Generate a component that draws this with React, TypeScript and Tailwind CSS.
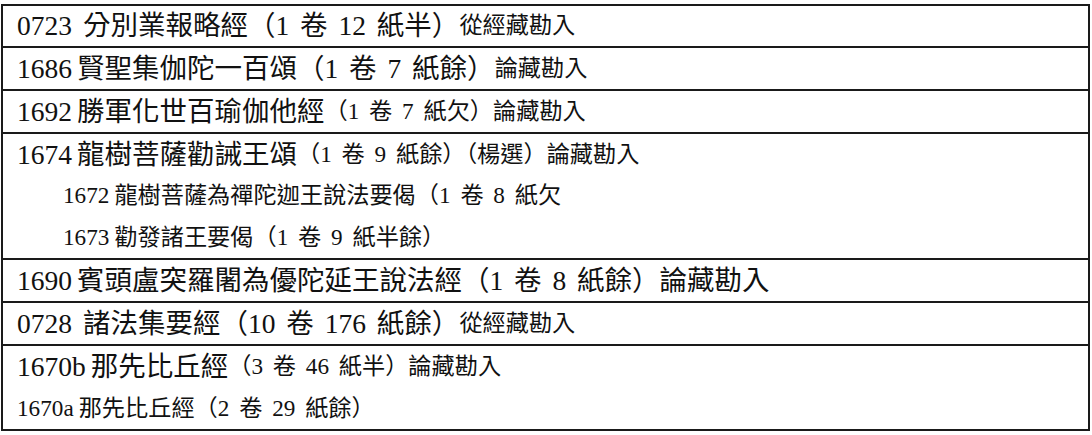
type Size = "big" | "small";

interface Part {
  text: string;
  size: Size;
}

interface Line {
  num: string;
  numSize: Size;
  wideGap?: boolean;
  parts: Part[];
  indent?: boolean;
}

interface Entry {
  id: string;
  heightClass: string;
  lines: Line[];
}

const big = (text: string): Part => ({ text, size: "big" });
const small = (text: string): Part => ({ text, size: "small" });

const SIZE_CLASS: Record<Size, string> = {
  big: "text-[27.5px] leading-none",
  small: "text-[23.2px] leading-none",
};

const ENTRIES: Entry[] = [
  {
    id: "0723",
    heightClass: "h-[42px]",
    lines: [
      {
        num: "0723",
        numSize: "big",
        wideGap: true,
        parts: [big("分別業報略經（1 卷 12 紙半）"), small("從經藏勘入")],
      },
    ],
  },
  {
    id: "1686",
    heightClass: "h-[43px]",
    lines: [
      { num: "1686", numSize: "big", parts: [big("賢聖集伽陀一百頌（1 卷 7 紙餘）"), small("論藏勘入")] },
    ],
  },
  {
    id: "1692",
    heightClass: "h-[43px]",
    lines: [
      { num: "1692", numSize: "big", parts: [big("勝軍化世百瑜伽他經"), small("（1 卷 7 紙欠）論藏勘入")] },
    ],
  },
  {
    id: "1674",
    heightClass: "h-[126px]",
    lines: [
      {
        num: "1674",
        numSize: "big",
        parts: [big("龍樹菩薩勸誡王頌"), small("（1 卷 9 紙餘）（楊選）論藏勘入")],
      },
      { num: "1672", numSize: "small", indent: true, parts: [small("龍樹菩薩為禪陀迦王說法要偈（1 卷 8 紙欠")] },
      { num: "1673", numSize: "small", indent: true, parts: [small("勸發諸王要偈（1 卷 9 紙半餘）")] },
    ],
  },
  {
    id: "1690",
    heightClass: "h-[43px]",
    lines: [
      { num: "1690", numSize: "big", parts: [big("賓頭盧突羅闍為優陀延王說法經（1 卷 8 紙餘）論藏勘入")] },
    ],
  },
  {
    id: "0728",
    heightClass: "h-[43px]",
    lines: [
      {
        num: "0728",
        numSize: "big",
        wideGap: true,
        parts: [big("諸法集要經（10 卷 176 紙餘）"), small("從經藏勘入")],
      },
    ],
  },
  {
    id: "1670",
    heightClass: "h-[83px]",
    lines: [
      { num: "1670b", numSize: "big", parts: [big("那先比丘經"), small("（3 卷 46 紙半）論藏勘入")] },
      { num: "1670a", numSize: "small", parts: [small("那先比丘經（2 卷 29 紙餘）")] },
    ],
  },
];

function TextLine({ line }: { line: Line }) {
  return (
    <div
      className={`flex flex-1 items-center whitespace-pre [word-spacing:0.25em] ${
        line.indent ? "pl-[46px]" : ""
      }`}
    >
      <span className={`${SIZE_CLASS[line.numSize]} ${line.wideGap ? "mr-[11px]" : "mr-[5px]"}`}>
        {line.num}
      </span>
      {line.parts.map((part, i) => (
        <span key={i} className={SIZE_CLASS[part.size]}>
          {part.text}
        </span>
      ))}
    </div>
  );
}

export default function App() {
  return (
    <div
      className="h-[435px] w-[1092px] bg-white pt-[4px] pl-[1px] text-[#111]"
      style={{ fontFamily: "'Liberation Serif', 'Noto Sans CJK TC', serif" }}
    >
      <div className="w-[1089px] border-2 border-[#1a1a1a]">
        {ENTRIES.map((entry, i) => (
          <div
            key={entry.id}
            className={`flex flex-col px-[14px] ${entry.heightClass} ${
              i < ENTRIES.length - 1 ? "border-b-2 border-[#1a1a1a]" : ""
            }`}
          >
            {entry.lines.map((line, j) => (
              <TextLine key={j} line={line} />
            ))}
          </div>
        ))}
      </div>
    </div>
  );
}
